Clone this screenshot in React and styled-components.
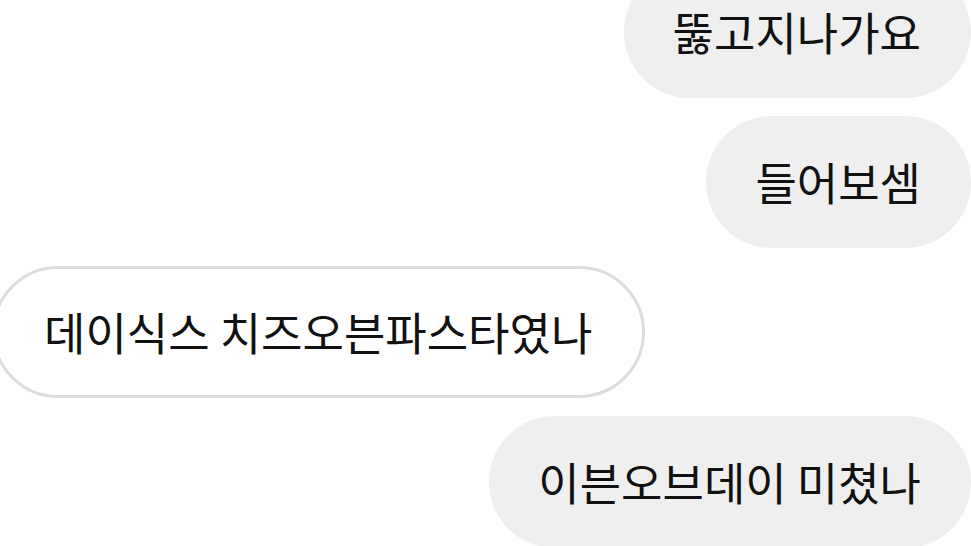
import styled, { createGlobalStyle } from "styled-components";

const GlobalStyle = createGlobalStyle`
  html, body {
    margin: 0;
    padding: 0;
    background: #ffffff;
    overflow: hidden;
  }
  body {
    font-family: "Noto Sans CJK KR", "Noto Sans", sans-serif;
  }
`;

const messages = [
  { id: 1, mine: true, text: "뚫고지나가요" },
  { id: 2, mine: true, text: "들어보셈" },
  { id: 3, mine: false, text: "데이식스 치즈오븐파스타였나" },
  { id: 4, mine: true, text: "이븐오브데이 미쳤나" },
];

const Thread = styled.div`
  display: flex;
  flex-direction: column;
  gap: 18px;
  margin-top: -34px;
  width: 971px;
`;

const Bubble = styled.div`
  box-sizing: border-box;
  height: 132px;
  display: flex;
  align-items: center;
  padding: 0 50px 2px 49px;
  border-radius: 66px;
  font-size: 45px;
  line-height: 1;
  color: #111111;
  white-space: nowrap;
  align-self: ${(p) => (p.$mine ? "flex-end" : "flex-start")};
  margin: ${(p) => (p.$mine ? "0" : "0 0 0 -8px")};
  background: ${(p) => (p.$mine ? "#efefef" : "#ffffff")};
  border: ${(p) => (p.$mine ? "none" : "3px solid #dcdcdc")};
`;

export default function App() {
  return (
    <>
      <GlobalStyle />
      <Thread>
        {messages.map((m) => (
          <Bubble key={m.id} $mine={m.mine}>
            {m.text}
          </Bubble>
        ))}
      </Thread>
    </>
  );
}
